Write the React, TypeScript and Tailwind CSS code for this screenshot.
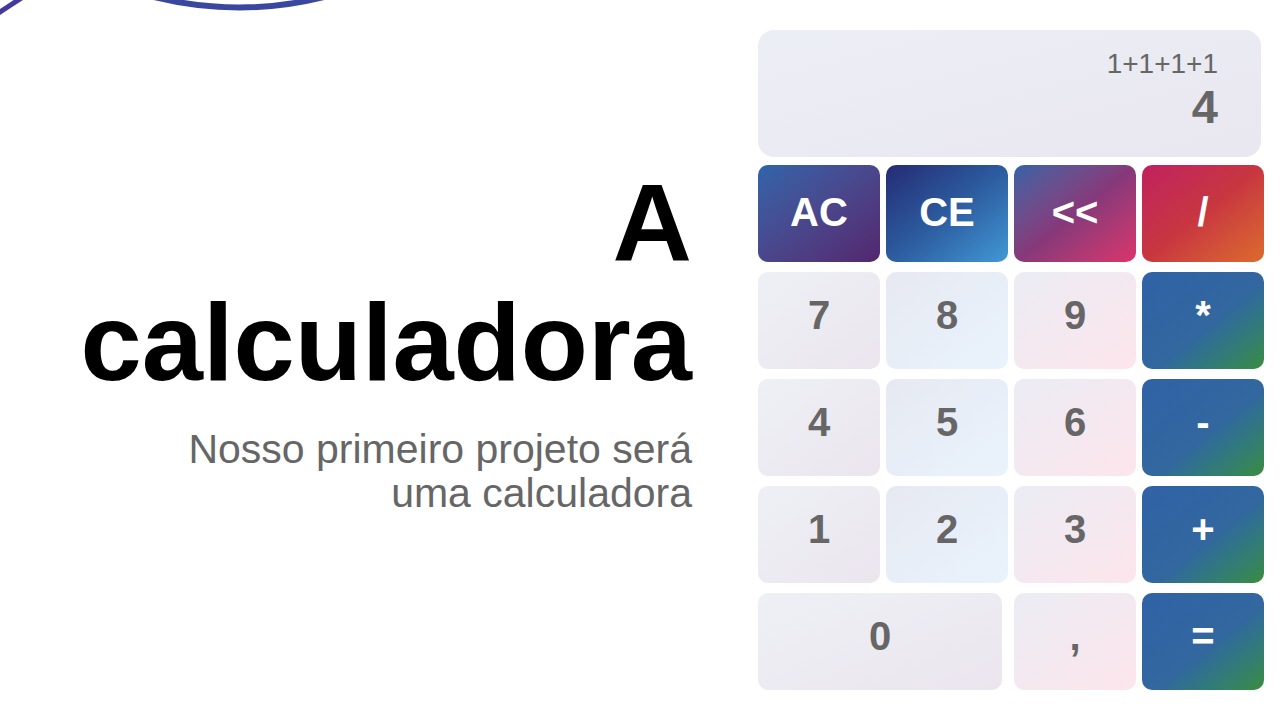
import React from 'react';

type Key = {
  label: string;
  tone: 'ac' | 'ce' | 'back' | 'div' | 'op' | 'c1' | 'c2' | 'c3';
  wide?: boolean;
};

const keys: Key[] = [
  { label: 'AC', tone: 'ac' },
  { label: 'CE', tone: 'ce' },
  { label: '<<', tone: 'back' },
  { label: '/', tone: 'div' },
  { label: '7', tone: 'c1' },
  { label: '8', tone: 'c2' },
  { label: '9', tone: 'c3' },
  { label: '*', tone: 'op' },
  { label: '4', tone: 'c1' },
  { label: '5', tone: 'c2' },
  { label: '6', tone: 'c3' },
  { label: '-', tone: 'op' },
  { label: '1', tone: 'c1' },
  { label: '2', tone: 'c2' },
  { label: '3', tone: 'c3' },
  { label: '+', tone: 'op' },
  { label: '0', tone: 'c1', wide: true },
  { label: ',', tone: 'c3' },
  { label: '=', tone: 'op' },
];

const toneClass: Record<Key['tone'], string> = {
  ac: 'bg-linear-to-br from-[#2f64a9] to-[#52266f] text-white pb-1',
  ce: 'bg-linear-to-br from-[#242b74] via-[#2c5c9f] to-[#4298d6] text-white pb-1',
  back: 'bg-linear-to-br from-[#2f62a6] via-[#86387a] to-[#dc326a] text-white pb-1',
  div: 'bg-linear-to-br from-[#c0205f] via-[#c8363f] to-[#dc6a2c] text-white pb-1',
  op: 'bg-linear-to-br from-[#3062a6] via-[#32679f] via-55% to-[#3b8c3b] text-white pb-3',
  c1: 'bg-linear-to-br from-[#eef0f6] to-[#ebe5ee] text-[#666666] pb-3',
  c2: 'bg-linear-to-br from-[#e7e9f2] to-[#e9f3fc] text-[#666666] pb-3',
  c3: 'bg-linear-to-br from-[#ebecf4] to-[#fde5ec] text-[#666666] pb-3',
};

// hand-drawn looking strokes peeking in from the top edge
function Decoration() {
  return (
    <svg
      className="absolute left-0 top-0"
      width="400"
      height="60"
      viewBox="0 0 400 60"
      fill="none"
    >
      <path d="M -3 14 Q 9 6 23 -3" stroke="#43399b" strokeWidth="5" strokeLinecap="round" />
      <path d="M 154 -3 Q 240 18 324 -3" stroke="#3a479f" strokeWidth="6" strokeLinecap="round" />
    </svg>
  );
}

function Calculator() {
  return (
    <div className="w-[506px] pt-[30px]">
      <div className="w-[503px] h-[127px] rounded-[16px] bg-linear-to-br from-[#eceef6] to-[#e9e7f0] pt-[18px] pr-[43px] text-right text-[#666666]">
        <div className="text-[28px] leading-[32px]">1+1+1+1</div>
        <div className="mt-[3px] text-[47px] leading-none font-bold">4</div>
      </div>
      <div className="mt-[8px] grid grid-cols-4 gap-x-[6px] gap-y-[10px] auto-rows-[97px]">
        {keys.map((k) => (
          <button
            key={k.label}
            className={`${toneClass[k.tone]} ${k.wide ? 'col-span-2 mr-[6px]' : ''} flex items-center justify-center rounded-[10px] text-[40px] font-bold leading-none`}
          >
            {k.label}
          </button>
        ))}
      </div>
    </div>
  );
}

export default function App() {
  return (
    <div className="relative h-[718px] w-[1280px] overflow-hidden bg-white font-['Liberation_Sans',Arial,sans-serif]">
      <Decoration />
      <div className="flex">
        <div className="w-[692px] pt-[162px] text-right">
          <h1 className="text-[110px] leading-[120px] font-bold text-black">
            A
            <br />
            calculadora
          </h1>
          <p className="mt-[25px] text-[41px] leading-[44px] text-[#666666]">
            Nosso primeiro projeto será
            <br />
            uma calculadora
          </p>
        </div>
        <div className="ml-[66px]">
          <Calculator />
        </div>
      </div>
    </div>
  );
}
